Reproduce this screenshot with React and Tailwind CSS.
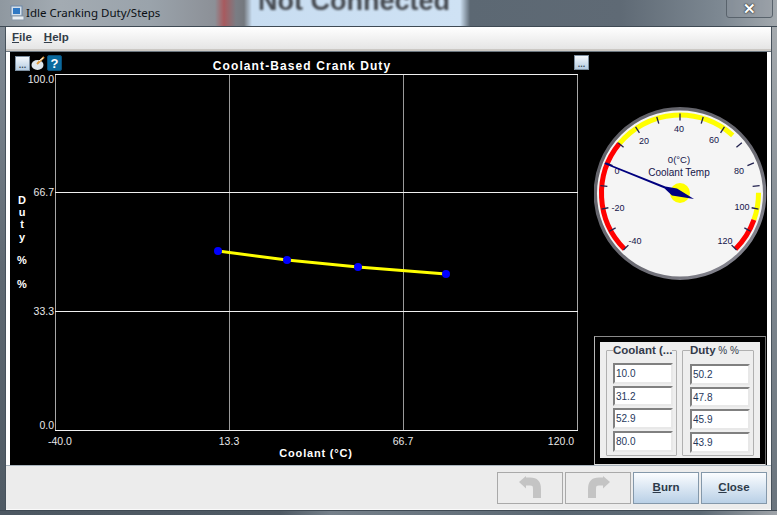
import React from "react";

const sans = "font-['Liberation_Sans',Arial,sans-serif]";

function polar(r, v) {
  const a = ((135 + (v + 40) * 1.6875) * Math.PI) / 180;
  return [680 + r * Math.cos(a), 193.5 + r * Math.sin(a)];
}
function arc(r, from, to) {
  const [x1, y1] = polar(r, from);
  const [x2, y2] = polar(r, to);
  const large = (to - from) * 1.6875 > 180 ? 1 : 0;
  return `M${x1} ${y1} A${r} ${r} 0 ${large} 1 ${x2} ${y2}`;
}

function Chart() {
  const pts = [[218, 251], [287, 260], [358, 267], [446, 274]];
  const t = { fontFamily: "'Liberation Sans',Arial,sans-serif" };
  const yl = [["100.0", 79], ["66.7", 192], ["33.3", 311], ["0.0", 425]];
  const xl = [["-40.0", 60], ["13.3", 229], ["66.7", 403], ["120.0", 561]];
  const stack = [["D", 200], ["u", 212], ["t", 224], ["y", 237], ["%", 260], ["%", 284]];
  return (
    <svg width="584" height="413" viewBox="10 52 584 413" className="block">
      <g shapeRendering="crispEdges" strokeWidth="1">
        <line x1="229.5" x2="229.5" y1="74" y2="430" stroke="#9a9a9a" />
        <line x1="403.5" x2="403.5" y1="74" y2="430" stroke="#9a9a9a" />
        <line x1="55.5" x2="55.5" y1="74" y2="430" stroke="#a8a8a8" />
        <line x1="577.5" x2="577.5" y1="74" y2="430" stroke="#a8a8a8" />
        <line x1="55" x2="578" y1="74.5" y2="74.5" stroke="#f0f0f0" />
        <line x1="55" x2="578" y1="192.5" y2="192.5" stroke="#f0f0f0" />
        <line x1="55" x2="578" y1="311.5" y2="311.5" stroke="#f0f0f0" />
        <line x1="55" x2="578" y1="430.5" y2="430.5" stroke="#f0f0f0" />
      </g>
      <polyline points={pts.map((p) => p.join(",")).join(" ")} fill="none" stroke="#ffff00" strokeWidth="3" />
      {pts.map((p) => (
        <circle key={p[0]} cx={p[0]} cy={p[1]} r="4" fill="#0000ff" />
      ))}
      <text x="302" y="69.5" textAnchor="middle" fill="#fff" fontSize="12" fontWeight="700" letterSpacing="1.1" style={t}>
        Coolant-Based Crank Duty
      </text>
      {yl.map(([s, y]) => (
        <text key={s} x="54" y={y + 3.5} textAnchor="end" fill="#e8e8e8" fontSize="10.5" style={t}>
          {s}
        </text>
      ))}
      {xl.map(([s, x]) => (
        <text key={s} x={x} y="444.5" textAnchor="middle" fill="#e8e8e8" fontSize="10.5" style={t}>
          {s}
        </text>
      ))}
      <text x="316" y="457" textAnchor="middle" fill="#fff" fontSize="11" fontWeight="700" letterSpacing="0.8" style={t}>
        Coolant (°C)
      </text>
      {stack.map(([s, y]) => (
        <text key={y} x="22" y={y + 4} textAnchor="middle" fill="#fff" fontSize="11" fontWeight="700" style={t}>
          {s}
        </text>
      ))}
    </svg>
  );
}

function Gauge() {
  const ticks = [];
  for (let v = -40; v <= 120; v += 10) ticks.push(v);
  const t = { fontFamily: "'Liberation Sans',Arial,sans-serif" };
  const labels = [
    ["40", 679, 129], ["20", 644, 141], ["60", 714, 140], ["0", 617, 171], ["80", 739, 171],
    ["-20", 618, 208], ["100", 742, 207], ["-40", 635, 241], ["120", 725, 241],
  ];
  return (
    <svg width="173" height="175" viewBox="594 106 173 175" className="block">
      <defs>
        <linearGradient id="bezel" x1="0" y1="0" x2="1" y2="1">
          <stop offset="0" stopColor="#5f5f66" />
          <stop offset="0.6" stopColor="#6c6c74" />
          <stop offset="1" stopColor="#8f8f9a" />
        </linearGradient>
      </defs>
      <circle cx="680" cy="193.5" r="84.7" fill="#f5f5f5" stroke="url(#bezel)" strokeWidth="3.4" />
      <path d={arc(78.5, -40, 10)} fill="none" stroke="#ff0000" strokeWidth="5" />
      <path d={arc(78.5, 10, 65)} fill="none" stroke="#ffff00" strokeWidth="5" />
      <path d={arc(78.5, 93, 105)} fill="none" stroke="#ffff00" strokeWidth="5" />
      <path d={arc(78.5, 105, 120)} fill="none" stroke="#ff0000" strokeWidth="5" />
      {ticks.map((v) => {
        const [x1, y1] = polar(73, v);
        const [x2, y2] = polar(80, v);
        return <line key={v} x1={x1} y1={y1} x2={x2} y2={y2} stroke="#20204e" strokeWidth="1.3" />;
      })}
      {labels.map(([s, x, y]) => (
        <text key={s} x={x} y={y + 3.3} textAnchor="middle" fill="#14144a" fontSize="9" style={t}>
          {s}
        </text>
      ))}
      <text x="679" y="162.5" textAnchor="middle" fill="#14144a" fontSize="9.5" style={t}>0(°C)</text>
      <text x="679" y="175.5" textAnchor="middle" fill="#14144a" fontSize="10" style={t}>Coolant Temp</text>
      <circle cx="680" cy="193" r="10" fill="#ffff00" />
      <polygon points="605,162.6 665.4,186.5 677,188.5 694,199 672,195.5 664.6,188.5 604.5,164" fill="#00007f" />
    </svg>
  );
}

function Field({ children }) {
  return (
    <div className={`h-[20.7px] w-[60px] bg-white border-2 border-t-[#808080] border-l-[#808080] border-r-[#e8e8e8] border-b-[#e8e8e8] ${sans} text-[10px] leading-[17px] pl-[1px] text-[#26385c]`}>
      {children}
    </div>
  );
}

function Group({ title, small, values, wide }) {
  return (
    <fieldset className={`${wide ? "w-[72px] pl-[7px]" : "w-[71px] pl-[6px]"} min-w-0 shrink-0 h-[114px] border border-[#b0b0b0] rounded-[1px]`}>
      <legend className={`${sans} text-[11.5px] leading-[16px] font-bold text-[#333a4a] whitespace-nowrap`}>
        {title}
        {small && <span className="text-[10px] font-normal"> {small}</span>}
      </legend>
      <div className="flex flex-col gap-[2px] mt-[5px]">
        {values.map((v) => (
          <Field key={v}>{v}</Field>
        ))}
      </div>
    </fieldset>
  );
}

function DotsBtn() {
  return (
    <div className="w-[15px] h-[15px] border border-[#7d8fa0] bg-gradient-to-b from-[#f4f8fc] to-[#b4cce2] flex items-end justify-center">
      <span className={`${sans} text-[9px] leading-[9px] font-bold text-[#3a4a5a]`}>...</span>
    </div>
  );
}

function TurnIcon({ flip }) {
  return (
    <svg width="23" height="24" viewBox="0 0 23 24" style={flip ? { transform: "scaleX(-1)" } : undefined}>
      <polygon points="0,6 7,0 7,12.5" fill="#c4c4c4" />
      <path d="M6 5.5 H11 Q18 5.5 18 13 V22" fill="none" stroke="#c4c4c4" strokeWidth="8" />
    </svg>
  );
}

const disabledBtn = "w-[66px] h-[32px] border border-[#a9a9a9] bg-[#ececec] flex items-center justify-center";
const activeBtn = `w-[66px] h-[32px] border border-[#8498aa] bg-gradient-to-b from-[#fbfdff] to-[#b9d0e6] flex items-center justify-center ${sans} text-[11.5px] font-bold text-[#2c3a4a]`;

export default function App() {
  return (
    <div className="w-[777px] h-[515px] flex flex-col overflow-hidden">
      <div className="relative h-[27px] shrink-0 flex items-center pl-[10px] overflow-hidden border-b border-[#3f4a54] bg-[linear-gradient(90deg,#8f98a0_0,#a3abb2_60px,#9aa3ab_150px,#8c9097_215px,#a85a5e_224px,#7a7d84_236px,#74787e_244px,#c8ddf1_252px,#cfe2f4_460px,#5c6873_470px,#5f6a75_620px,#7d8892_720px,#a3a9ae_777px)]">
        <div className={`absolute left-[258px] top-[-13px] ${sans} text-[27px] leading-[28px] font-bold text-[#45494f] blur-[1.2px] whitespace-nowrap`}>
          Not Connected
        </div>
        <svg width="15" height="16" viewBox="0 0 15 16" className="relative shrink-0">
          <rect x="1" y="1" width="11" height="10" fill="#d4e0ec" stroke="#6d88a8" />
          <rect x="3" y="3" width="7" height="6" fill="#2f78c4" />
          <rect x="2" y="11" width="12" height="4" fill="#e8eef4" stroke="#8a97a6" />
        </svg>
        <span className="relative ml-[1px] font-['Noto_Sans',sans-serif] text-[11.5px] text-[#0b0f14] whitespace-nowrap">
          Idle Cranking Duty/Steps
        </span>
        <div className="absolute right-[4px] top-[-2px] w-[47px] h-[20px] border border-[#59636c] rounded-b-[3px] bg-[#8d969e]/30 flex items-center justify-center">
          <span className={`${sans} text-[15px] leading-none font-bold text-white [text-shadow:0_0_1px_#222,0_0_2px_#222]`}>✕</span>
        </div>
      </div>

      <div className="flex flex-1 min-h-0">
        <div className="w-[5px] bg-gradient-to-b from-[#838d97] via-[#5f6972] to-[#4f5a64]" />
        <div className="flex-1 flex flex-col border-x border-[#47525c] bg-white min-w-0">
          <div className="h-[24px] shrink-0 flex items-center gap-[12px] pl-[6px] bg-gradient-to-b from-white to-[#e5e5e5] border-b-2 border-b-[#cbc8c4]">
            <span className={`${sans} text-[11.5px] font-bold text-[#333c48]`}><u>F</u>ile</span>
            <span className={`${sans} text-[11.5px] font-bold text-[#333c48]`}><u>H</u>elp</span>
          </div>
          <div className="h-[1px] shrink-0 bg-[#6c7780]" />
          <div className="h-[413px] shrink-0 pl-[4px] pr-[4px] bg-white">
            <div className="relative h-full bg-black flex">
              <Chart />
              <div className="absolute left-[5px] top-[3px] flex items-center gap-[1px]">
                <DotsBtn />
                <svg width="15" height="15" viewBox="0 0 15 15">
                  <ellipse cx="6.5" cy="9" rx="6" ry="5" fill="#dfe6ec" />
                  <path d="M6 8 L13 1" stroke="#e09a3c" strokeWidth="2" />
                  <path d="M8 5 L12 2" stroke="#fff" strokeWidth="1" />
                </svg>
                <div className={`w-[15px] h-[16px] rounded-[2px] bg-[#0a6a9e] border border-[#0a4f78] flex items-center justify-center ${sans} text-[13px] font-bold leading-none text-white`}>
                  ?
                </div>
              </div>
              <div className="absolute left-[564px] top-[3px]">
                <DotsBtn />
              </div>
              <div className="flex flex-col">
                <div className="pt-[54px]">
                  <Gauge />
                </div>
                <div className="mt-[55px] w-[172px] h-[129px] border border-t-[#8a8a8a] border-r-[#6a6a6a] border-l-[#b8b8b8] border-b-[#e0e0e0] p-[5px]">
                  <div className="h-[116px] bg-[#eeeeee] flex gap-[5px] pl-[6px]">
                    <Group title="Coolant (..." values={["10.0", "31.2", "52.9", "80.0"]} />
                    <Group wide title="Duty" small="% %" values={["50.2", "47.8", "45.9", "43.9"]} />
                  </div>
                </div>
              </div>
            </div>
          </div>
          <div className="flex-1 border-t border-[#a9b4bd] bg-[#ececec] flex justify-end items-start gap-[2px] pt-[6px] pr-[4px] border-b border-b-[#fafafa]">
            <div className={disabledBtn}><TurnIcon /></div>
            <div className={disabledBtn}><TurnIcon flip /></div>
            <div className={activeBtn}><span><u>B</u>urn</span></div>
            <div className={activeBtn}><span><u>C</u>lose</span></div>
          </div>
        </div>
        <div className="w-[5px] bg-gradient-to-b from-[#a5aaae] via-[#7f8890] to-[#6a747d]" />
      </div>
      <div className="h-[5px] shrink-0 border-t border-[#3f4a54] bg-[linear-gradient(90deg,#4d5862_0,#4f5a64_280px,#75808a_330px,#5a6772_560px,#5d6a75_700px,#a0a5aa_777px)]" />
    </div>
  );
}
